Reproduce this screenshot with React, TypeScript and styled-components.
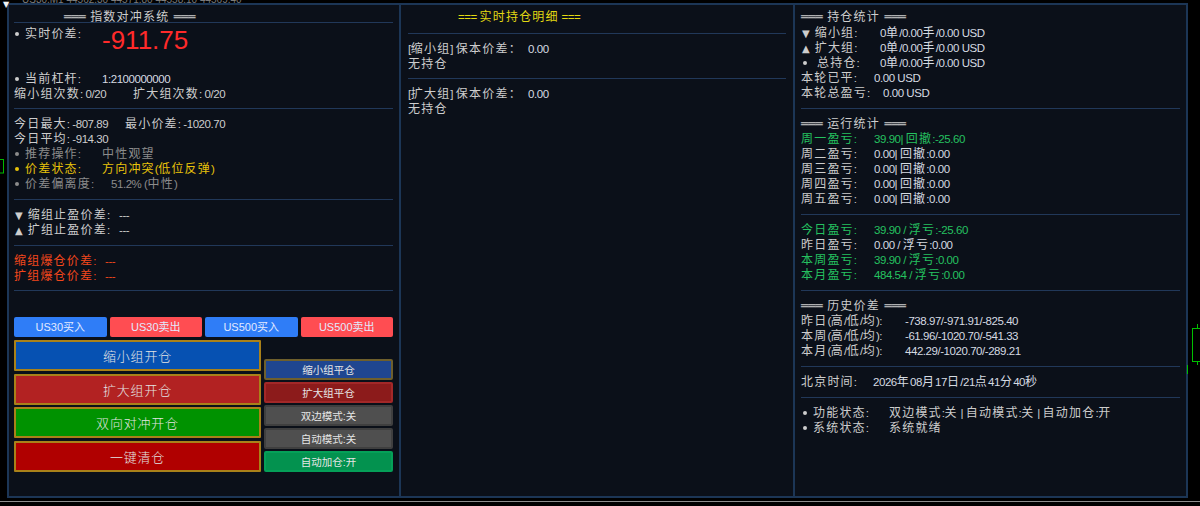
import React from "react";
import styled, { createGlobalStyle } from "styled-components";

const C = {
  bg: "#0b1019",
  border: "#1c3656",
  sep: "#213859",
  text: "#cdcdcd",
  value: "#d6dbe2",
  dim: "#8c8c8c",
  yellow: "#e8c20a",
  lemon: "#e2d812",
  orange: "#f2471c",
  green: "#25c160",
  red: "#ff2a2a",
};

const Global = createGlobalStyle`
  html, body { margin: 0; padding: 0; background: #000; }
  body {
    font-family: "Liberation Sans", "Noto Sans CJK SC", sans-serif;
    overflow: hidden;
  }
`;

const Screen = styled.div`
  position: relative;
  width: 1200px;
  height: 506px;
  background: #000;
  overflow: hidden;
  display: flex;
  flex-direction: column;
`;

const Stage = styled.div`
  padding: 3px 0 0 7px;
`;

const Panel = styled.div`
  position: relative;
  z-index: 1;
  width: 1181px;
  height: 495px;
  box-sizing: border-box;
  border: 2px solid ${C.border};
  background: ${C.bg};
  display: grid;
  grid-template-columns: 392px 394px 1fr;
  color: ${C.text};
`;

const AxisLine = styled.div`
  height: 1px;
  margin-top: 3px;
  background: #8e8e8e;
`;

const Column = styled.div<{ $pl: number; $pr: number; $divider?: boolean }>`
  box-sizing: border-box;
  padding: 3px ${(p) => p.$pr}px 0 ${(p) => p.$pl}px;
  border-right: ${(p) => (p.$divider ? `2px solid ${C.border}` : "none")};
  display: flex;
  flex-direction: column;
  min-width: 0;
`;

const Title = styled.div<{ $h: number; $indent: number; $color?: string }>`
  flex: none;
  height: ${(p) => p.$h}px;
  line-height: 15px;
  padding-left: ${(p) => p.$indent}px;
  color: ${(p) => p.$color || C.text};
  white-space: nowrap;
`;

const Rule = styled.span`
  font-family: "DejaVu Sans Mono", monospace;
  font-size: 12px;
  letter-spacing: 0;
`;

const Sep = styled.div`
  flex: none;
  height: 1px;
  background: ${C.sep};
`;

const Section = styled.div<{ $pt: number; $pb: number }>`
  flex: none;
  padding: ${(p) => p.$pt}px 0 ${(p) => p.$pb}px;
  display: flex;
  flex-direction: column;
`;

const Row = styled.div<{ $color?: string }>`
  display: flex;
  align-items: baseline;
  height: 15px;
  line-height: 15px;
  white-space: nowrap;
  color: ${(p) => p.$color || "inherit"};
`;

const Label = styled.span<{ $w?: number }>`
  flex: none;
  width: ${(p) => (p.$w ? `${p.$w}px` : "auto")};
`;

const Value = styled.span<{ $color?: string }>`
  flex: none;
  color: ${(p) => p.$color || "inherit"};
`;

const Dot = styled.span<{ $ml?: number; $mr?: number }>`
  display: inline-block;
  width: 4px;
  height: 4px;
  border-radius: 50%;
  background: currentColor;
  margin: 0 ${(p) => p.$mr ?? 6}px 0 ${(p) => p.$ml ?? 1}px;
  vertical-align: 2px;
`;

const Tri = styled.span`
  font-family: "DejaVu Sans", sans-serif;
  font-size: 10px;
  margin: 0 5px 0 1px;
`;

const Han = styled.span`
  font-family: "Noto Sans CJK SC", "Noto Sans CJK TC", sans-serif;
  font-size: 12px;
  letter-spacing: 1.2px;
`;

const Lat = styled.span`
  font-family: "Liberation Sans", Arial, sans-serif;
  font-size: 11.5px;
  letter-spacing: -0.45px;
`;

const HAN_SPLIT = /([\u2E80-\u9FFF\u3000-\u303F\uFF00-\uFFEF]+)/;
const HAN_TEST = /^[\u2E80-\u9FFF\u3000-\u303F\uFF00-\uFFEF]+$/;

function T({ s }: { s: string }) {
  return (
    <>
      {s
        .split(HAN_SPLIT)
        .map((part, i) =>
          part === "" ? null : HAN_TEST.test(part) ? (
            <Han key={i}>{part}</Han>
          ) : (
            <Lat key={i}>{part}</Lat>
          )
        )}
    </>
  );
}

const PriceBlock = styled.div`
  display: flex;
  align-items: flex-start;
  height: 45px;
  line-height: 15px;
  white-space: nowrap;
`;

const BigNum = styled.span`
  font-family: "Liberation Sans", Arial, sans-serif;
  font-size: 26px;
  line-height: 26px;
  margin-top: 1.5px;
  color: ${C.red};
`;

const TopBtns = styled.div`
  display: grid;
  grid-template-columns: repeat(4, 1fr);
  gap: 3px;
  height: 20px;
  margin-top: 26px;
`;

const Pill = styled.button<{ $bg: string }>`
  border: none;
  border-radius: 2px;
  padding: 0;
  background: ${(p) => p.$bg};
  color: #e2eaff;
  font-family: "Liberation Sans", "Noto Sans CJK SC", sans-serif;
  font-size: 11px;
  line-height: 20px;
`;

const ActionArea = styled.div`
  display: grid;
  grid-template-columns: 247px 1fr;
  gap: 3px;
  margin-top: 3px;
`;

const BigCol = styled.div`
  display: flex;
  flex-direction: column;
  gap: 2.5px;
`;

const SmallCol = styled.div`
  display: flex;
  flex-direction: column;
  justify-content: flex-end;
  gap: 2px;
`;

const BigBtn = styled.button<{ $bg: string }>`
  box-sizing: border-box;
  height: 31px;
  border: 2px solid #a98119;
  border-radius: 1px;
  padding: 0;
  background: ${(p) => p.$bg};
  color: #e4e4e4;
  font-family: "Noto Sans CJK SC", sans-serif;
  font-size: 13px;
  font-weight: 300;
  letter-spacing: 0.8px;
`;

const SmallBtn = styled.button<{ $bg: string; $bd: string }>`
  box-sizing: border-box;
  height: 21px;
  border: 2px solid ${(p) => p.$bd};
  border-radius: 2px;
  padding: 0;
  background: ${(p) => p.$bg};
  color: #e6e6e6;
  font-family: "Liberation Sans", "Noto Sans CJK SC", sans-serif;
  font-size: 10.5px;
`;

const TopInfo = styled.div`
  position: absolute;
  z-index: 0;
  left: 22px;
  top: -6px;
  font-family: "Liberation Sans", sans-serif;
  font-size: 10px;
  color: #7a7a7a;
  white-space: nowrap;
`;

const TopTriangle = styled.span`
  position: absolute;
  z-index: 2;
  left: 3px;
  top: 0px;
  font-family: "DejaVu Sans", sans-serif;
  font-size: 8px;
  color: #f2f2f2;
`;

const CandleSvg = styled.svg<{ $left: number; $top: number }>`
  position: absolute;
  z-index: 2;
  left: ${(p) => p.$left}px;
  top: ${(p) => p.$top}px;
`;

const weekRows = [
  { d: "周一盈亏:", v: "39.90| 回撤:-25.60", c: C.green },
  { d: "周二盈亏:", v: "0.00| 回撤:0.00" },
  { d: "周三盈亏:", v: "0.00| 回撤:0.00" },
  { d: "周四盈亏:", v: "0.00| 回撤:0.00" },
  { d: "周五盈亏:", v: "0.00| 回撤:0.00" },
];

const pnlRows = [
  { d: "今日盈亏:", v: "39.90 / 浮亏:-25.60", c: C.green },
  { d: "昨日盈亏:", v: "0.00 / 浮亏:0.00" },
  { d: "本周盈亏:", v: "39.90 / 浮亏:0.00", c: C.green },
  { d: "本月盈亏:", v: "484.54 / 浮亏:0.00", c: C.green },
];

const histRows = [
  { d: "昨日(高/低/均):", v: "-738.97/-971.91/-825.40" },
  { d: "本周(高/低/均):", v: "-61.96/-1020.70/-541.33" },
  { d: "本月(高/低/均):", v: "442.29/-1020.70/-289.21" },
];

function LeftColumn() {
  return (
    <Column $pl={5} $pr={6} $divider>
      <Title $h={14} $indent={50}>
        <Rule>═══</Rule> <T s="指数对冲系统" /> <Rule>═══</Rule>
      </Title>
      <Sep />
      <Section $pt={2} $pb={8}>
        <PriceBlock>
          <Label $w={88}>
            <Dot />
            <T s="实时价差:" />
          </Label>
          <BigNum>-911.75</BigNum>
        </PriceBlock>
        <Row>
          <Label $w={88}>
            <Dot />
            <T s="当前杠杆:" />
          </Label>
          <Value $color={C.value}>
            <T s="1:2100000000" />
          </Value>
        </Row>
        <Row>
          <Label $w={119}>
            <T s="缩小组次数: 0/20" />
          </Label>
          <Label>
            <T s="扩大组次数: 0/20" />
          </Label>
        </Row>
      </Section>
      <Sep />
      <Section $pt={6} $pb={9}>
        <Row>
          <Label $w={111}>
            <T s="今日最大: -807.89" />
          </Label>
          <Label>
            <T s="最小价差: -1020.70" />
          </Label>
        </Row>
        <Row>
          <Label>
            <T s="今日平均: -914.30" />
          </Label>
        </Row>
        <Row $color={C.dim}>
          <Label $w={88}>
            <Dot />
            <T s="推荐操作:" />
          </Label>
          <Value>
            <T s="中性观望" />
          </Value>
        </Row>
        <Row $color={C.yellow}>
          <Label $w={88}>
            <Dot />
            <T s="价差状态:" />
          </Label>
          <Value>
            <T s="方向冲突(低位反弹)" />
          </Value>
        </Row>
        <Row $color={C.dim}>
          <Label $w={97}>
            <Dot />
            <T s="价差偏离度:" />
          </Label>
          <Value>
            <T s="51.2% (中性)" />
          </Value>
        </Row>
      </Section>
      <Sep />
      <Section $pt={6} $pb={9}>
        <Row>
          <Label $w={105}>
            <Tri>▼</Tri>
            <T s="缩组止盈价差:" />
          </Label>
          <Value>
            <T s="---" />
          </Value>
        </Row>
        <Row>
          <Label $w={105}>
            <Tri>▲</Tri>
            <T s="扩组止盈价差:" />
          </Label>
          <Value>
            <T s="---" />
          </Value>
        </Row>
      </Section>
      <Sep />
      <Section $pt={6} $pb={8}>
        <Row $color={C.orange}>
          <Label $w={91}>
            <T s="缩组爆仓价差:" />
          </Label>
          <Value>
            <T s="---" />
          </Value>
        </Row>
        <Row $color={C.orange}>
          <Label $w={91}>
            <T s="扩组爆仓价差:" />
          </Label>
          <Value>
            <T s="---" />
          </Value>
        </Row>
      </Section>
      <Sep />
      <TopBtns>
        <Pill $bg="#2f7df7">US30买入</Pill>
        <Pill $bg="#ff4d52">US30卖出</Pill>
        <Pill $bg="#2f7df7">US500买入</Pill>
        <Pill $bg="#ff4d52">US500卖出</Pill>
      </TopBtns>
      <ActionArea>
        <BigCol>
          <BigBtn $bg="#0651b2">缩小组开仓</BigBtn>
          <BigBtn $bg="#b22222">扩大组开仓</BigBtn>
          <BigBtn $bg="#009200">双向对冲开仓</BigBtn>
          <BigBtn $bg="#b00000">一键清仓</BigBtn>
        </BigCol>
        <SmallCol>
          <SmallBtn $bg="#1f4690" $bd="#6e5f2c">缩小组平仓</SmallBtn>
          <SmallBtn $bg="#8c1b1b" $bd="#a32828">扩大组平仓</SmallBtn>
          <SmallBtn $bg="#4f4f4f" $bd="#3f3f3f">双边模式:关</SmallBtn>
          <SmallBtn $bg="#4f4f4f" $bd="#3f3f3f">自动模式:关</SmallBtn>
          <SmallBtn $bg="#03924f" $bd="#05a058">自动加仓:开</SmallBtn>
        </SmallCol>
      </ActionArea>
    </Column>
  );
}

function MiddleColumn() {
  return (
    <Column $pl={7} $pr={7} $divider>
      <Title $h={25} $indent={50} $color={C.lemon}>
        <T s="=== 实时持仓明细 ===" />
      </Title>
      <Sep />
      <Section $pt={6} $pb={8}>
        <Row>
          <Label $w={120}>
            <T s="[缩小组] 保本价差：" />
          </Label>
          <Value $color={C.value}>
            <T s="0.00" />
          </Value>
        </Row>
        <Row>
          <Label>
            <T s="无持仓" />
          </Label>
        </Row>
      </Section>
      <Sep />
      <Section $pt={6} $pb={8}>
        <Row>
          <Label $w={120}>
            <T s="[扩大组] 保本价差：" />
          </Label>
          <Value $color={C.value}>
            <T s="0.00" />
          </Value>
        </Row>
        <Row>
          <Label>
            <T s="无持仓" />
          </Label>
        </Row>
      </Section>
    </Column>
  );
}

function RightColumn() {
  return (
    <Column $pl={6} $pr={6}>
      <Title $h={16} $indent={0}>
        <Rule>═══</Rule> <T s="持仓统计" /> <Rule>═══</Rule>
      </Title>
      <Section $pt={0} $pb={9}>
        <Row>
          <Label $w={79}>
            <Tri>▼</Tri>
            <T s="缩小组:" />
          </Label>
          <Value $color={C.value}>
            <T s="0单/0.00手/0.00 USD" />
          </Value>
        </Row>
        <Row>
          <Label $w={79}>
            <Tri>▲</Tri>
            <T s="扩大组:" />
          </Label>
          <Value $color={C.value}>
            <T s="0单/0.00手/0.00 USD" />
          </Value>
        </Row>
        <Row>
          <Label $w={79}>
            <Dot $ml={2} $mr={10} />
            <T s="总持仓:" />
          </Label>
          <Value $color={C.value}>
            <T s="0单/0.00手/0.00 USD" />
          </Value>
        </Row>
        <Row>
          <Label $w={73}>
            <T s="本轮已平:" />
          </Label>
          <Value $color={C.value}>
            <T s="0.00 USD" />
          </Value>
        </Row>
        <Row>
          <Label $w={82}>
            <T s="本轮总盈亏:" />
          </Label>
          <Value $color={C.value}>
            <T s="0.00 USD" />
          </Value>
        </Row>
      </Section>
      <Sep />
      <Section $pt={6} $pb={9}>
        <Row>
          <Label>
            <Rule>═══</Rule> <T s="运行统计" /> <Rule>═══</Rule>
          </Label>
        </Row>
        {weekRows.map((r) => (
          <Row key={r.d} $color={r.c}>
            <Label $w={73}>
              <T s={r.d} />
            </Label>
            <Value $color={r.c || C.value}>
              <T s={r.v} />
            </Value>
          </Row>
        ))}
      </Section>
      <Sep />
      <Section $pt={6} $pb={9}>
        {pnlRows.map((r) => (
          <Row key={r.d} $color={r.c}>
            <Label $w={73}>
              <T s={r.d} />
            </Label>
            <Value $color={r.c || C.value}>
              <T s={r.v} />
            </Value>
          </Row>
        ))}
      </Section>
      <Sep />
      <Section $pt={6} $pb={9}>
        <Row>
          <Label>
            <Rule>═══</Rule> <T s="历史价差" /> <Rule>═══</Rule>
          </Label>
        </Row>
        {histRows.map((r) => (
          <Row key={r.d}>
            <Label $w={104}>
              <T s={r.d} />
            </Label>
            <Value $color={C.value}>
              <T s={r.v} />
            </Value>
          </Row>
        ))}
      </Section>
      <Sep />
      <Section $pt={6} $pb={9}>
        <Row>
          <Label $w={72}>
            <T s="北京时间:" />
          </Label>
          <Value $color={C.value}>
            <T s="2026年08月17日/21点41分40秒" />
          </Value>
        </Row>
      </Section>
      <Sep />
      <Section $pt={6} $pb={0}>
        <Row>
          <Label $w={88}>
            <Dot $ml={2} $mr={6} />
            <T s="功能状态:" />
          </Label>
          <Value>
            <T s="双边模式:关 | 自动模式:关 | 自动加仓:开" />
          </Value>
        </Row>
        <Row>
          <Label $w={88}>
            <Dot $ml={2} $mr={6} />
            <T s="系统状态:" />
          </Label>
          <Value>
            <T s="系统就绪" />
          </Value>
        </Row>
      </Section>
    </Column>
  );
}

export default function App() {
  return (
    <>
      <Global />
      <Screen>
        <TopInfo>US30,M1  44562.30 44571.80 44558.10 44569.40</TopInfo>
        <TopTriangle>▼</TopTriangle>
        <CandleSvg $left={0} $top={155} width={7} height={25}>
          <rect x={-3} y={4.5} width={6.5} height={13.5} fill="none" stroke="#00b800" strokeWidth={1} />
        </CandleSvg>
        <CandleSvg $left={1186} $top={320} width={14} height={56}>
          <line x1={11.5} y1={4} x2={11.5} y2={45} stroke="#00c000" strokeWidth={1} />
          <rect x={6.5} y={8.5} width={10} height={33} fill="#000" stroke="#00c000" strokeWidth={1} />
          <line x1={1.5} y1={45} x2={1.5} y2={54} stroke="#00c000" strokeWidth={1} />
        </CandleSvg>
        <Stage>
          <Panel>
            <LeftColumn />
            <MiddleColumn />
            <RightColumn />
          </Panel>
        </Stage>
        <AxisLine />
      </Screen>
    </>
  );
}
